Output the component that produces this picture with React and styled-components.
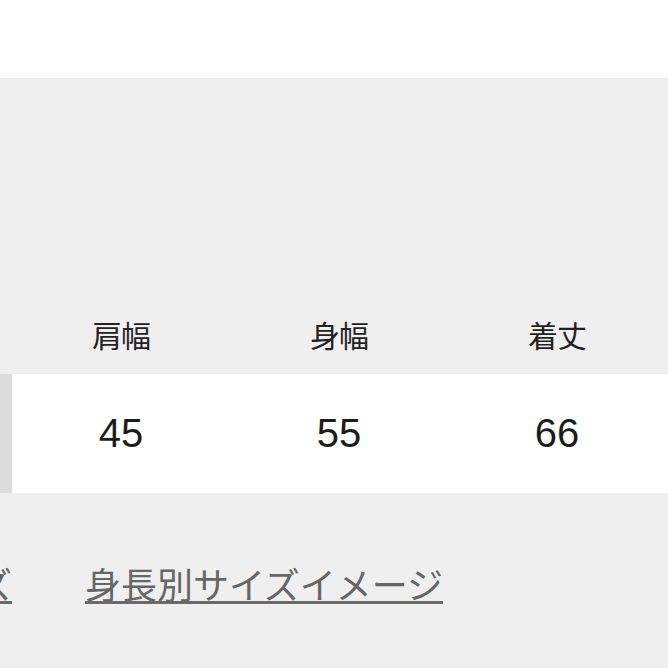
import React from "react";
import styled, { createGlobalStyle } from "styled-components";

const Global = createGlobalStyle`
  html, body {
    margin: 0;
    padding: 0;
    background: #efefef;
    overflow: hidden;
  }
  body {
    font-family: "Noto Sans CJK JP", "Liberation Sans", sans-serif;
  }
`;

const Page = styled.div`
  width: 668px;
  height: 668px;
  overflow: hidden;
  display: flex;
  flex-direction: column;
  background: #efefef;
`;

const TopBar = styled.div`
  height: 78px;
  background: #ffffff;
  box-shadow: 0 1px 1px rgba(0, 0, 0, 0.02);
  flex-shrink: 0;
`;

const Section = styled.section`
  padding-top: 220px;
  display: flex;
  flex-direction: column;
`;

const Table = styled.div`
  display: grid;
  grid-template-columns: 12px 218px 218px 222px;
`;

const HeadCell = styled.div`
  height: 76px;
  box-sizing: border-box;
  padding-bottom: 4px;
  padding-right: ${(p) => (p.$last ? "4px" : "0")};
  display: flex;
  align-items: center;
  justify-content: center;
  font-family: "Noto Sans CJK JP", sans-serif;
  font-size: 30px;
  color: #222222;
  letter-spacing: -1px;
`;

const LabelCell = styled.div`
  height: 119px;
  background: #dcdcdc;
`;

const ValueCell = styled.div`
  height: 119px;
  box-sizing: border-box;
  padding-right: ${(p) => (p.$last ? "4px" : "0")};
  background: #ffffff;
  display: flex;
  align-items: center;
  justify-content: center;
  font-family: "Liberation Sans", Arial, sans-serif;
  font-size: 40px;
  color: #1c1c1c;
`;

const Links = styled.div`
  margin-top: 72px;
  display: flex;
  gap: 73px;
  margin-left: -95px;
`;

const Link = styled.a`
  display: inline-block;
  flex-shrink: 0;
  font-family: "Noto Sans CJK JP", sans-serif;
  font-size: 36px;
  line-height: 36px;
  color: #666666;
  text-decoration: none;
  white-space: nowrap;
  border-bottom: 3px solid #6a6a6a;
`;

const heads = ["肩幅", "身幅", "着丈"];
const values = ["45", "55", "66"];

export default function App() {
  return (
    <Page>
      <Global />
      <TopBar />
      <Section>
        <Table>
          <HeadCell />
          {heads.map((h, i) => (
            <HeadCell key={h} $last={i === heads.length - 1}>
              {h}
            </HeadCell>
          ))}
          <LabelCell />
          {values.map((v, i) => (
            <ValueCell key={i} $last={i === values.length - 1}>
              {v}
            </ValueCell>
          ))}
        </Table>
        <Links>
          <Link href="#">サイズ</Link>
          <Link href="#">身長別サイズイメージ</Link>
        </Links>
      </Section>
    </Page>
  );
}
